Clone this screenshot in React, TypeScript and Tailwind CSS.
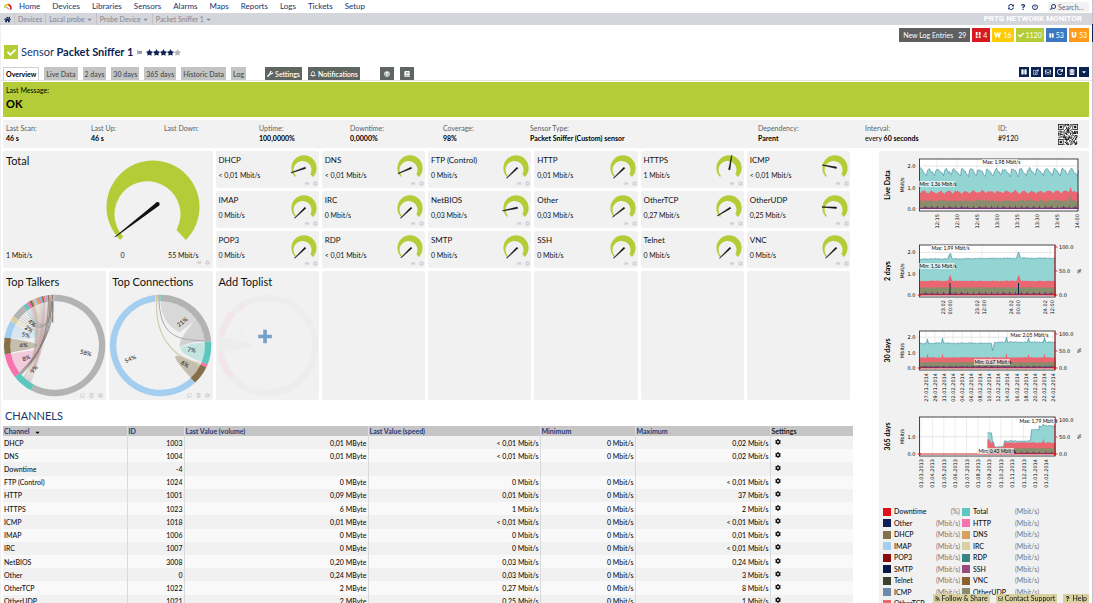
import React from "react";
import {
  FaRegBell, FaCaretDown, FaCheck, FaCog, FaFlag, FaHome, FaPause, FaPowerOff,
  FaQuestion, FaRegClone, FaRegEnvelope, FaRss, FaSearch, FaStar, FaSyncAlt, FaThumbtack,
  FaTrashAlt, FaWrench, FaRegEdit, FaRedo, FaGlobe, FaBook,
} from "react-icons/fa";

const noise = (i: number, seed = 1) => {
  const v = Math.sin(i * 12.9898 + seed * 78.233) * 43758.5453;
  return v - Math.floor(v);
};

/* ---------- top bars ---------- */

const NAV = ["Home", "Devices", "Libraries", "Sensors", "Alarms", "Maps", "Reports", "Logs", "Tickets", "Setup"];

function TopNav() {
  return (
    <header className="flex h-[13px] items-center bg-white pl-1 pr-[3px] text-[8px] leading-[13px] text-[#17346b]">
      <svg viewBox="0 0 16 14" className="h-2 w-2" aria-hidden="true">
        <path d="M1 9A7 7 0 0 1 5 3" fill="none" stroke="#b4cc38" strokeWidth="3" />
        <path d="M4 3.4A7 7 0 0 1 10 2.5" fill="none" stroke="#ffb400" strokeWidth="3" />
        <path d="M9 2.3A7 7 0 0 1 13 12" fill="none" stroke="#d71920" strokeWidth="3.4" />
        <path d="M5 7l5 5" stroke="#444" strokeWidth="1.6" />
      </svg>
      <nav className="ml-[7px] flex gap-3">
        {NAV.map((n) => (
          <a key={n} href="#">{n}</a>
        ))}
      </nav>
      <div className="ml-auto flex items-center gap-[6px] text-[7px]">
        <button aria-label="Refresh"><FaSyncAlt size={6} /></button>
        <button aria-label="Help"><FaQuestion size={6} /></button>
        <button aria-label="Log out"><FaPowerOff size={6} /></button>
        <label className="ml-1 flex h-[10px] items-center gap-[2px] bg-[#f2f2f2] pl-[2px]">
          <FaSearch size={6} className="-scale-x-100" />
          <input aria-label="Search" placeholder="Search..." className="w-[31px] bg-transparent leading-[10px] outline-none placeholder:text-[#6a6a72]" />
        </label>
      </div>
    </header>
  );
}

const CRUMBS = [
  { t: "Devices", menu: false },
  { t: "Local probe", menu: true },
  { t: "Probe Device", menu: true },
  { t: "Packet Sniffer 1", menu: true },
];

function Crumbs() {
  return (
    <div className="flex h-3 items-center bg-[#d5d5dc] text-[7px] leading-3 text-[#85858d]">
      <a href="#" aria-label="Home" className="flex w-[14px] justify-center text-[#0b2353]"><FaHome size={7} /></a>
      {CRUMBS.map((c) => (
        <a key={c.t} href="#" className="flex items-center gap-px border-l border-[#c2c2c9] px-[3px]">
          {c.t}
          {c.menu && <FaCaretDown size={7} />}
        </a>
      ))}
      <strong className="ml-auto pr-[10px] font-['Roboto',sans-serif] text-[8px] font-bold text-white">PRTG NETWORK MONITOR</strong>
    </div>
  );
}

const BangIcon = () => (
  <svg viewBox="0 0 8 8" className="h-[6px] w-[6px]" fill="currentColor" aria-hidden="true">
    <path d="M1 0h2.4v4.6H1zM5 0h2.4v4.6H5zM1 5.8h2.4V8H1zM5 5.8h2.4V8H5z" />
  </svg>
);
const UIcon = () => (
  <svg viewBox="0 0 8 8" className="h-[6px] w-[6px]" fill="none" stroke="currentColor" strokeWidth="2.2" aria-hidden="true">
    <path d="M2 0v4.5a2 2 0 0 0 4 0V0" />
  </svg>
);
const WIcon = () => (
  <svg viewBox="0 0 10 8" className="h-[6px] w-[7px]" fill="none" stroke="currentColor" strokeWidth="2" aria-hidden="true">
    <path d="M1 0l1.8 6.5L5 1l2.2 5.5L9 0" />
  </svg>
);

function StatusRow() {
  return (
    <div className="flex justify-end gap-[2px] pr-[3px] pt-[3px] text-[7px] leading-[14px] text-white">
      <a href="#" className="flex h-[14px] items-center gap-[5px] bg-[#5f5f5f] px-1"><span>New Log Entries</span><span>29</span></a>
      <a href="#" className="flex h-[14px] items-center gap-[2px] bg-[#d71920] px-[3px]"><BangIcon />4</a>
      <a href="#" className="flex h-[14px] items-center gap-[2px] bg-[#ffcb05] px-[2px]"><WIcon />16</a>
      <a href="#" className="flex h-[14px] items-center gap-[2px] bg-[#b4cc38] px-[2px]"><FaCheck size={6} />1120</a>
      <a href="#" className="flex h-[14px] items-center gap-[2px] bg-[#3c78bf] px-[3px]"><FaPause size={5} />53</a>
      <a href="#" className="flex h-[14px] items-center gap-[2px] bg-[#ff9a1c] px-[2px]"><UIcon />53</a>
    </div>
  );
}

function Title() {
  return (
    <div className="flex h-[20px] items-center pl-[3px] text-[11px] leading-[14px] text-[#17346b]">
      <span className="mr-[3px] flex h-[14px] w-[14px] items-center justify-center bg-[#b4cc38] text-white"><FaCheck size={9} /></span>
      <h1 className="font-normal">Sensor <b className="font-bold text-[#0b2353]">Packet Sniffer 1</b></h1>
      <FaFlag size={5} className="mx-1 text-[#9a9aa2]" />
      <span className="flex text-[#0b2353]" role="img" aria-label="4 of 5 stars">
        {[0, 1, 2, 3, 4].map((i) => (
          <FaStar key={i} size={7} className={i === 4 ? "text-[#b4b4ba]" : ""} />
        ))}
      </span>
    </div>
  );
}

const TABS = ["Live Data", "2 days", "30 days", "365 days", "Historic Data", "Log"];
const TOOLS = [
  { n: "Pause", I: FaPause }, { n: "Edit", I: FaRegEdit }, { n: "Mail", I: FaRegEnvelope },
  { n: "Scan now", I: FaRedo }, { n: "Delete", I: FaTrashAlt }, { n: "More", I: FaCaretDown },
];

function Tabs() {
  return (
    <div className="flex h-[19px] items-end border-b border-[#e4e4e8] pl-[2px] pr-[3px] text-[7px] font-semibold leading-3">
      <div className="flex gap-[5px] text-[#50545c]">
        <button className="h-[13px] border border-b-0 border-[#d0d0d0] bg-white px-[2px] font-bold text-black">Overview</button>
        {TABS.map((t) => (
          <button key={t} className="h-[13px] bg-[#c2c5c3] px-[2px]">{t}</button>
        ))}
      </div>
      <div className="ml-[19px] flex gap-[6px] text-white">
        <button className="flex h-[13px] items-center gap-[2px] bg-[#5f6661] px-[2px]"><FaWrench size={6} />Settings</button>
        <button className="flex h-[13px] items-center gap-[2px] bg-[#5f6661] px-[2px]"><FaRegBell size={6} />Notifications</button>
        <button aria-label="Map" className="ml-[14px] flex h-[13px] w-[14px] items-center justify-center bg-[#5f6661]"><FaGlobe size={6} /></button>
        <button aria-label="Book" className="flex h-[13px] w-[14px] items-center justify-center bg-[#5f6661]"><FaBook size={6} /></button>
      </div>
      <div className="mb-[3px] ml-auto flex gap-[2px] text-white">
        {TOOLS.map(({ n, I }) => (
          <button key={n} aria-label={n} className="flex h-[10px] w-[10px] items-center justify-center bg-[#0b2353]"><I size={6} /></button>
        ))}
      </div>
    </div>
  );
}

/* ---------- info strip ---------- */

const INFO: [string, React.ReactNode][] = [
  ["Last Scan:", <b>46 s</b>],
  ["Last Up:", <b>46 s</b>],
  ["Last Down:", ""],
  ["Uptime:", <b>100,0000%</b>],
  ["Downtime:", <b>0,0000%</b>],
  ["Coverage:", <b>98%</b>],
  ["Sensor Type:", <b>Packet Sniffer (Custom) sensor</b>],
  ["Dependency:", <b>Parent</b>],
  ["Interval:", <>every <b>60 seconds</b></>],
  ["ID:", "#9120"],
];

function QrCode() {
  const n = 25;
  const finder = (x: number, y: number) => (x < 8 && y < 8) || (x >= n - 8 && y < 8) || (x < 8 && y >= n - 8);
  const cells: string[] = [];
  for (let y = 0; y < n; y++) for (let x = 0; x < n; x++) if (!finder(x, y) && noise(y * n + x, 5) > 0.5) cells.push(`M${x} ${y}h1v1h-1z`);
  return (
    <svg viewBox="0 0 25 25" className="h-[21px] w-[20px]" preserveAspectRatio="none" role="img" aria-label="QR code">
      <rect width="25" height="25" fill="#fff" />
      <path d={cells.join("")} fill="#222" />
      {[[0, 0], [18, 0], [0, 18]].map(([x, y]) => (
        <g key={`${x}-${y}`} fill="#222">
          <rect x={x + 0.5} y={y + 0.5} width="6" height="6" fill="none" stroke="#222" />
          <rect x={x + 2} y={y + 2} width="3" height="3" />
        </g>
      ))}
    </svg>
  );
}

function InfoStrip() {
  return (
    <dl className="mt-[3px] grid h-[28px] grid-cols-[85fr_73fr_95fr_91fr_93fr_87fr_228fr_107fr_133fr_60fr_31fr] items-center bg-[#f2f2f2] pl-[3px] text-[7px] leading-[10px]">
      {INFO.map(([k, v]) => (
        <div key={k} className="h-[22px] whitespace-nowrap">
          <dt className="text-[#5f5f5f]">{k}</dt>
          <dd className="text-black">{v}</dd>
        </div>
      ))}
      <div><QrCode /></div>
    </dl>
  );
}

/* ---------- gauges ---------- */

const GAUGE = "M-32.9 32.9A46.5 46.5 0 1 1 32.9 32.9L23.5 23A33 33 0 1 0 -29.8 29.6Z";

function TileActions({ toplist = false }: { toplist?: boolean }) {
  return (
    <span className="flex gap-1 text-[#d0d0d2]">
      {toplist ? (
        <>
          <button aria-label="Copy"><FaRegClone size={5} /></button>
          <button aria-label="Delete"><FaTrashAlt size={5} /></button>
        </>
      ) : (
        <button aria-label="Pin"><FaThumbtack size={5} className="rotate-90" /></button>
      )}
      <button aria-label="Settings"><FaCog size={5} /></button>
    </span>
  );
}

const ZERO = [-9.4, 10.2];
const CHANNEL_TILES: { n: string; v: string; tip: number[]; piv?: number[] }[] = [
  { n: "DHCP", v: "< 0,01 Mbit/s", tip: [-13, 4.8] },
  { n: "DNS", v: "< 0,01 Mbit/s", tip: [-12, 5.6] },
  { n: "FTP (Control)", v: "0 Mbit/s", tip: ZERO },
  { n: "HTTP", v: "0,01 Mbit/s", tip: ZERO },
  { n: "HTTPS", v: "1 Mbit/s", tip: [2.7, -12.6], piv: [0.3, 1.7] },
  { n: "ICMP", v: "< 0,01 Mbit/s", tip: [-12.6, -3] },
  { n: "IMAP", v: "0 Mbit/s", tip: ZERO },
  { n: "IRC", v: "0 Mbit/s", tip: ZERO },
  { n: "NetBIOS", v: "0,03 Mbit/s", tip: [-13.4, 2.8] },
  { n: "Other", v: "0,03 Mbit/s", tip: [-10.4, 9] },
  { n: "OtherTCP", v: "0,27 Mbit/s", tip: [-11.6, 7.8] },
  { n: "OtherUDP", v: "0,25 Mbit/s", tip: [-13, -1] },
  { n: "POP3", v: "0 Mbit/s", tip: ZERO },
  { n: "RDP", v: "< 0,01 Mbit/s", tip: [-9, 9.8] },
  { n: "SMTP", v: "0 Mbit/s", tip: ZERO },
  { n: "SSH", v: "0 Mbit/s", tip: ZERO },
  { n: "Telnet", v: "0 Mbit/s", tip: ZERO },
  { n: "VNC", v: "0 Mbit/s", tip: ZERO },
];

function needle(px: number, py: number, tx: number, ty: number, w: number) {
  const l = Math.hypot(tx - px, ty - py);
  const nx = (-(ty - py) / l) * w;
  const ny = ((tx - px) / l) * w;
  return `M${px + nx} ${py + ny}L${tx + nx / 5} ${ty + ny / 5}L${tx - nx / 5} ${ty - ny / 5}L${px - nx} ${py - ny}Z`;
}

function ChannelTile({ n, v, tip, piv = [1.4, -0.2] }: (typeof CHANNEL_TILES)[number]) {
  return (
    <section className="flex justify-between rounded-[2px] bg-[#f1f1f1] pl-[3px] text-[#111]">
      <div className="flex flex-col gap-1 whitespace-nowrap pt-[3px]">
        <h3 className="text-[8px] leading-3">{n}</h3>
        <p className="text-[7px] leading-[10px]">{v}</p>
      </div>
      <div className="flex flex-col items-end pr-px pt-[3px]">
        <svg viewBox="-14 -14 28 27" className="h-[27px] w-[28px]" role="img" aria-label={`${n} gauge`}>
          <path d={GAUGE} transform="scale(.272)" fill="#b4cc38" />
          <path d={needle(piv[0], piv[1], tip[0], tip[1], 0.7)} fill="#111" stroke="#111" strokeWidth=".5" />
        </svg>
        <TileActions />
      </div>
    </section>
  );
}

function TotalTile() {
  return (
    <section className="col-span-2 row-span-3 flex justify-between rounded-[2px] bg-[#f1f1f1] pl-[3px] text-[7px] leading-[10px] text-[#111]">
      <div className="flex flex-col justify-between pb-2 pt-[3px]">
        <h3 className="text-[11px] leading-[14px]">Total</h3>
        <p>1 Mbit/s</p>
      </div>
      <div className="flex flex-col pt-2">
        <svg viewBox="-48 -48 96 88" className="mr-3 h-[88px] w-[96px]" role="img" aria-label="Total gauge">
          <path d={GAUGE} fill="#b4cc38" />
          <path d={needle(5, -3.2, -38, 30, 2.1)} fill="#111" />
          <circle cx="4.6" cy="-3" r="2.1" fill="#111" />
        </svg>
        <div className="flex justify-between pl-4 pr-[14px] pt-[3px]"><span>0</span><span>55 Mbit/s</span></div>
        <div className="self-end pr-[3px]"><TileActions /></div>
      </div>
    </section>
  );
}

/* ---------- toplists ---------- */

const pt = (deg: number, r: number) => {
  const a = ((deg - 90) * Math.PI) / 180;
  return `${(Math.cos(a) * r).toFixed(2)} ${(Math.sin(a) * r).toFixed(2)}`;
};
const ring = (a: number, b: number, ro = 50.7, ri = 44.3) => {
  const big = b - a > 180 ? 1 : 0;
  return `M${pt(a, ro)}A${ro} ${ro} 0 ${big} 1 ${pt(b, ro)}L${pt(b, ri)}A${ri} ${ri} 0 ${big} 0 ${pt(a, ri)}Z`;
};
const ribbon = (a: number, b: number, c: number, d: number, r = 44.3) =>
  `M${pt(a, r)}A${r} ${r} 0 0 1 ${pt(b, r)}Q0 0 ${pt(c, r)}A${r} ${r} 0 0 1 ${pt(d, r)}Q0 0 ${pt(a, r)}Z`;
const lobe = (a: number, b: number, depth: number) =>
  `M${pt(a, 44.3)}A44.3 44.3 0 0 1 ${pt(b, 44.3)}C${pt(b - 2, depth)} ${pt(a + 2, depth)} ${pt(a, 44.3)}Z`;

const G = "#b3b3b3", T = "#5cc7be", P = "#f673ae", B = "#857049", L = "#a3cef0", Y = "#dccf9f", O = "#d6a05e";

const TALKERS: [number, number, string][] = [
  [0, 208, G], [208, 232, T], [232, 260, P], [260, 279.4, B], [279.4, 299, L], [299, 305.5, Y], [305.5, 322, G],
  [322, 326.5, T], [326.5, 330, P], [330, 333, B], [333, 335, O], [335, 338, L], [338, 341, O], [341, 343, P],
  [343, 345, T], [345, 347, B], [347, 349, P], [349, 352, G], [352, 354, "#a06c62"], [354, 357, G], [357, 358.5, "#8c7462"], [358.5, 360, G],
];
const CONNECTIONS: [number, number, string][] = [
  [0, 85.4, G], [85.4, 112, T], [112, 115.5, P], [115.5, 137.4, B], [137.4, 353.6, L], [353.6, 357, Y], [357, 359, G], [359, 360, T],
];

const Pct = ({ x, y, r, children }: { x: number; y: number; r: number; children: string }) => (
  <text transform={`translate(${x} ${y}) rotate(${r})`} textAnchor="middle" dominantBaseline="middle" fontSize="6" fill="#111">{children}</text>
);

function TalkersChart() {
  return (
    <>
      {TALKERS.map(([a, b, c]) => <path key={a} d={ring(a, b)} fill={c} />)}
      <path d={lobe(261, 279, 8)} fill={B} opacity=".4" />
      <path d={lobe(233, 259, 6)} fill={P} opacity=".3" />
      <path d={ribbon(280, 298, 326, 330)} fill={L} opacity=".3" />
      <path d={ribbon(299, 305, 330, 333)} fill={Y} opacity=".35" />
      {TALKERS.slice(7, 20).map(([a, b, c], i) => (
        <path key={a} d={`M${pt(a, 44.3)}L${pt(b, 44.3)}Q-8 -2 ${pt(225 - i, 44.3)}L${pt(224 - i, 44.3)}Q-12 -2 ${pt(a, 44.3)}Z`} fill={c} stroke={c} strokeWidth=".4" opacity=".22" />
      ))}
      {[306, 309, 312, 315, 318, 321].map((a, i) => (
        <path key={a} d={`M${pt(a, 44.3)}C${pt(a + 4, 22)} ${pt(340, 12)} ${pt(354 + i / 2, 44.3)}`} fill="none" stroke="#999" strokeWidth=".6" opacity=".7" />
      ))}
      {[0, 1, 2, 3].map((i) => (
        <path key={i} d={`M${pt(229 + i, 44.3)}Q${-6 + i * 2} ${2 - i * 3} ${pt(352 + i * 2, 44.3)}`} fill="none" stroke={i % 2 ? "#777" : "#86705f"} strokeWidth=".9" opacity=".8" />
      ))}
      <path d="M-2-44V-23" stroke="#888" strokeWidth="1.4" />
      <Pct x={31} y={8} r={14}>58%</Pct>
      <Pct x={-31} y={0} r={0}>6%</Pct>
      <Pct x={-28} y={13} r={-22}>8%</Pct>
      <Pct x={-20} y={24} r={-50}>9%</Pct>
      <Pct x={-29} y={-10} r={10}>5%</Pct>
      <Pct x={-26} y={-16} r={30}>2%</Pct>
      <Pct x={-23} y={-22} r={40}>4%</Pct>
    </>
  );
}

function ConnectionsChart() {
  return (
    <>
      <path d={`M${pt(0, 44.3)}A44.3 44.3 0 0 1 ${pt(53, 44.3)}C30-20 22-16 19-13C8-18 0-30 ${pt(0, 44.3)}Z`} fill={G} opacity=".4" />
      <path d={`M${pt(53, 44.3)}A44.3 44.3 0 0 1 ${pt(85, 44.3)}C34-4 24-2 19 2C18-6 26-14 ${pt(53, 44.3)}Z`} fill={G} opacity=".5" />
      <path d={lobe(86, 112, 13)} fill={T} opacity=".3" />
      <path d={lobe(116, 137, 10)} fill={B} opacity=".4" />
      <path d={`M${pt(358, 44.3)}C0-4 24-6 ${pt(84, 44.3)}`} fill="none" stroke="#aaa" />
      <path d={`M${pt(355, 44.3)}C-6-8 14 14 ${pt(114, 44.3)}`} fill="none" stroke="#d3cbae" strokeWidth="1.2" />
      {CONNECTIONS.map(([a, b, c]) => <path key={a} d={ring(a, b)} fill={c} />)}
      <Pct x={22} y={-23} r={-38}>21%</Pct>
      <Pct x={31} y={5} r={8}>7%</Pct>
      <Pct x={24} y={19} r={30}>6%</Pct>
      <Pct x={-30} y={14} r={-24}>54%</Pct>
    </>
  );
}

function AddChart() {
  return (
    <>
      <circle r="47.5" fill="none" stroke="#ededed" strokeWidth="6.4" />
      <path d={ring(228, 262)} fill="#f2e6ec" />
      <path d={ring(280, 314)} fill="#f2e6ec" />
      <path d={ring(324, 330)} fill="#f2e6ec" />
      <path d={lobe(262, 280, 6)} fill="#eeedec" />
      {[318, 326, 334, 342, 350].map((a) => (
        <path key={a} d={`M${pt(a, 44.3)}Q-18-14 ${pt(a - 70, 44)}`} fill="none" stroke="#eeeef0" strokeWidth=".6" />
      ))}
      <path d="M-4.4-15.8h3.6v5h5v3.6h-5v5h-3.6v-5h-5v-3.6h5z" fill="#74a0cc" />
    </>
  );
}

function Toplist({ title, actions = true, children }: { title: string; actions?: boolean; children: React.ReactNode }) {
  return (
    <section className="relative rounded-[2px] bg-[#f1f1f1] pt-[3px] text-[#111]">
      <h3 className="whitespace-nowrap pl-[3px] text-[11px] leading-4">{title}</h3>
      <svg viewBox="-51.5 -55.5 103 110" className="h-[110px] w-full" role="img" aria-label={title}>{children}</svg>
      {actions && <div className="absolute bottom-[2px] right-[3px]"><TileActions toplist /></div>}
    </section>
  );
}

/* ---------- channel table ---------- */

const ROWS = [
  ["DHCP", "1003", "0,01 MByte", "< 0,01 Mbit/s", "0 Mbit/s", "0,02 Mbit/s"],
  ["DNS", "1004", "0,01 MByte", "< 0,01 Mbit/s", "0 Mbit/s", "0,02 Mbit/s"],
  ["Downtime", "-4", "", "", "", ""],
  ["FTP (Control)", "1024", "0 MByte", "0 Mbit/s", "0 Mbit/s", "< 0,01 Mbit/s"],
  ["HTTP", "1001", "0,09 MByte", "0,01 Mbit/s", "0 Mbit/s", "37 Mbit/s"],
  ["HTTPS", "1023", "6 MByte", "1 Mbit/s", "0 Mbit/s", "2 Mbit/s"],
  ["ICMP", "1018", "0,01 MByte", "< 0,01 Mbit/s", "0 Mbit/s", "< 0,01 Mbit/s"],
  ["IMAP", "1006", "0 MByte", "0 Mbit/s", "0 Mbit/s", "0,01 Mbit/s"],
  ["IRC", "1007", "0 MByte", "0 Mbit/s", "0 Mbit/s", "< 0,01 Mbit/s"],
  ["NetBIOS", "3008", "0,20 MByte", "0,03 Mbit/s", "0 Mbit/s", "0,24 Mbit/s"],
  ["Other", "0", "0,24 MByte", "0,03 Mbit/s", "0 Mbit/s", "3 Mbit/s"],
  ["OtherTCP", "1022", "2 MByte", "0,27 Mbit/s", "0 Mbit/s", "8 Mbit/s"],
  ["OtherUDP", "1021", "2 MByte", "0,25 Mbit/s", "0 Mbit/s", "1 Mbit/s"],
];

function Channels() {
  return (
    <section>
      <h2 className="pl-[2px] pt-[9px] text-[11px] leading-[14px] text-[#17346b]">CHANNELS</h2>
      <table className="mt-[3px] h-[182px] w-full table-fixed border-collapse text-[7px] font-medium leading-[10px] text-[#111]">
        <colgroup>
          <col className="w-[124px]" /><col className="w-[57px]" /><col className="w-[184px]" /><col className="w-[172px]" />
          <col className="w-[95px]" /><col className="w-[135px]" /><col />
        </colgroup>
        <thead>
          <tr className="h-[10px] bg-[#c5c5c5] text-left text-[#1d3c7a]">
            {["Channel", "ID", "Last Value (volume)", "Last Value (speed)", "Minimum", "Maximum"].map((h, i) => (
              <th key={h} className="border-r border-[#dadada] p-0 pl-px font-bold">
                {h}
                {i === 0 && <FaCaretDown size={7} className="ml-1 inline text-black" />}
              </th>
            ))}
            <th className="p-0 pl-px font-bold text-[#222]">Settings</th>
          </tr>
        </thead>
        <tbody>
          {ROWS.map((r) => (
            <tr key={r[0]} className="odd:bg-[#f1f1f1] even:bg-[#f9f9f9]">
              <td className="border-r border-[#dadada] p-0 pl-px">{r[0]}</td>
              {r.slice(1).map((c, i) => (
                <td key={i} className="border-r border-[#dadada] p-0 pr-px text-right">{c}</td>
              ))}
              <td className="p-0 pl-1"><button aria-label={`${r[0]} settings`} className="block pb-[2px]"><FaCog size={6} /></button></td>
            </tr>
          ))}
        </tbody>
      </table>
    </section>
  );
}

/* ---------- graphs ---------- */

type Graph = {
  name: string;
  h: number;
  top: number;
  zero: number;
  unit: number;
  right: number;
  yTicks: number[];
  pctTop?: number;
  labels: { x: number; lines: string[] }[];
  max: { x: number; y: number; t: string };
  min: { x: number; y: number; t: string };
  total: (f: number, i: number) => number;
  red: (f: number, i: number) => number;
  olive: (f: number, i: number) => number;
  from?: number;
};

const near = (f: number, c: number, w = 0.006) => Math.max(0, 1 - Math.abs(f - c) / w);
const spikes = [0.06, 0.17, 0.64, 0.8, 0.92];
const year = (f: number) => (f < 0.53 ? 1.2 : f < 0.55 ? 0.7 : f < 0.62 ? 0.4 : f < 0.82 ? 0.72 : f < 0.88 ? 1.38 : 1.6);

const GRAPHS: Graph[] = [
  {
    name: "Live Data", h: 86, top: 8, zero: 58, unit: 21.5, right: 199, yTicks: [0, 1, 2],
    labels: ["12:15", "12:30", "12:45", "13:00", "13:15", "13:30", "13:45", "14:00"].map((t, i) => ({ x: 58 + i * 20, lines: [t] })),
    max: { x: 103, y: 11, t: "Max: 1,98 Mbit/s" }, min: { x: 40, y: 33, t: "Min: 1,36 Mbit/s" },
    total: (f, i) => 1.94 - 0.5 * Math.pow(Math.abs(((f * 19 + 0.1) % 1) - 0.25), 1.1) - noise(i, 2) * 0.12,
    red: (f, i) => 0.68 + 0.12 * Math.abs(Math.sin(f * 60)) + noise(i, 3) * 0.08 + near(f, 0.95, 0.01) * 0.25,
    olive: (f, i) => 0.32 + 0.14 * noise(i, 4) + near(f, 0.95, 0.01) * 0.2,
  },
  {
    name: "2 days", h: 86, top: 8, zero: 58, unit: 21.3, right: 176, yTicks: [0, 1, 2], pctTop: 10,
    labels: [["23.02", "00:00"], ["23.02", "12:00"], ["24.02", "00:00"], ["24.02", "12:00"]].map((l, i) => ({ x: 69 + i * 34, lines: l })),
    max: { x: 52, y: 11, t: "Max: 1,99 Mbit/s" }, min: { x: 40, y: 29, t: "Min: 1,56 Mbit/s" },
    total: (f, i) => 1.66 + noise(i, 2) * 0.05 + f * 0.05 + 0.32 * (near(f, 0.225, 0.015) + near(f, 0.73, 0.015)),
    red: (f, i) => 0.64 + noise(i, 6) * 0.04 + 0.33 * (near(f, 0.225, 0.015) + near(f, 0.73, 0.015)),
    olive: (f, i) => 0.34 + 0.03 * noise(i, 4),
  },
  {
    name: "30 days", h: 86, top: 8, zero: 45, unit: 15.4, right: 176, yTicks: [0, 1, 2], pctTop: 11,
    labels: ["27.01.2014", "29.01.2014", "31.01.2014", "02.02.2014", "04.02.2014", "06.02.2014", "08.02.2014", "10.02.2014", "12.02.2014", "14.02.2014", "16.02.2014", "18.02.2014", "20.02.2014", "22.02.2014", "24.02.2014"].map((t, i) => ({ x: 47 + i * 9.05, lines: [t] })),
    max: { x: 131, y: 12, t: "Max: 2,05 Mbit/s" }, min: { x: 95, y: 39, t: "Min: 0,67 Mbit/s" },
    total: (f, i) => 1.57 + noise(i, 8) * 0.07 + (f > 0.54 ? 0.07 : 0) - near(f, 0.54) * 0.95 + spikes.reduce((s, c) => s + near(f, c) * 0.35, 0),
    red: (f, i) => 0.66 + noise(i, 9) * 0.05 + spikes.reduce((s, c) => s + near(f, c) * 0.3, 0),
    olive: (f, i) => 0.36 + noise(i, 4) * 0.03,
  },
  {
    name: "365 days", h: 86, top: 8, zero: 45, unit: 17.2, right: 176, yTicks: [0, 1], pctTop: 11,
    labels: ["01.03.2013", "01.04.2013", "01.05.2013", "01.06.2013", "01.07.2013", "01.08.2013", "01.09.2013", "01.10.2013", "01.11.2013", "01.12.2013", "01.01.2014", "01.02.2014"].map((t, i) => ({ x: 42 + i * 11.4, lines: [t] })),
    max: { x: 140, y: 12, t: "Max: 1,79 Mbit/s" }, min: { x: 99, y: 42, t: "Min: 0,43 Mbit/s" },
    from: 0.5,
    total: (f, i) => year(f) + noise(i, 8) * 0.06 + near(f, 0.91) * 0.2,
    red: (f, i) => Math.min(year(f) - 0.03, 0.64) + noise(i, 9) * 0.05 + near(f, 0.51, 0.015) * 0.25 + near(f, 0.91) * 0.3,
    olive: (f, i) => 0.32 + noise(i, 4) * 0.03,
  },
];

function GraphView({ g }: { g: Graph }) {
  const x0 = 40.5;
  const w = g.right - x0;
  const bottom = g.zero + 2;
  const n = Math.round(w);
  const start = Math.round((g.from ?? 0) * n);
  const series = (fn: (f: number, i: number) => number) => {
    const p: string[] = [];
    for (let i = start; i <= n; i++) p.push(`${(x0 + i).toFixed(1)} ${(g.zero - fn(i / n, i) * g.unit).toFixed(1)}`);
    return p.join("L");
  };
  const area = (fn: (f: number, i: number) => number) => `M${x0 + start} ${g.zero}L${series(fn)}V${g.zero}Z`;
  const mid = (g.top + bottom) / 2;
  return (
    <svg viewBox={`0 0 210 ${g.h}`} className="block w-full font-['DejaVu_Sans',sans-serif]" fontSize="5" fill="#000" role="img" aria-label={`${g.name} graph`}>
      <rect x={x0} y={g.top} width={w} height={bottom - g.top} fill="#fff" />
      {g.labels.map((l) => <path key={l.lines.join()} d={`M${l.x} ${g.top}V${bottom + 2}`} stroke="#dcdcdc" strokeWidth=".5" />)}
      {g.yTicks.map((t) => <path key={t} d={`M${x0 - 2} ${g.zero - t * g.unit}H${g.right}`} stroke="#ccc" strokeWidth=".5" />)}
      <path d={area(g.total)} fill="#93d5d3" />
      <path d={`M${series(g.total)}`} fill="none" stroke="#4c8fa3" strokeWidth=".7" />
      <path d={area(g.red)} fill="#ea6671" />
      <path d={area(g.olive)} fill="#8a8d6c" />
      <path d={area((_, i) => 0.04 + (i % 6 === 0 ? 0.12 : noise(i, 11) * 0.04))} fill="#7b3278" />
      {g.name === "2 days" && <path d="M71 58V46M139.5 58V46" stroke="#0b2353" />}
      {g.name === "30 days" && <path d={`M40.5 44H176`} stroke="#1f3c8c" strokeWidth=".8" strokeDasharray="6 1" />}
      <rect x={x0} y={g.top} width={w} height={bottom - g.top} fill="none" stroke="#333" strokeWidth=".9" />
      {g.yTicks.map((t) => <text key={t} x={x0 - 4} y={g.zero - t * g.unit + 2} textAnchor="end">{t}.0</text>)}
      {g.pctTop !== undefined && (
        <>
          <path d={`M${g.right} ${g.top}V${bottom}M${x0} ${g.zero}H${g.right}`} stroke="#d9202b" strokeWidth=".9" />
          <circle cx={g.right} cy={g.zero} r="1.2" fill="#e0101b" />
          <circle cx={x0} cy={g.zero} r="1.2" fill="#e0101b" />
          {[100, 50, 0].map((p) => {
            const y = g.zero - (p / 100) * (g.zero - g.pctTop!);
            return (
              <g key={p}>
                <path d={`M${g.right} ${y}h2.4`} stroke="#d9202b" strokeWidth=".9" />
                <text x={g.right + 4} y={y + 2}>{p.toFixed(1)}</text>
              </g>
            );
          })}
          <text transform={`translate(202 ${mid}) rotate(-90)`} textAnchor="middle">%</text>
        </>
      )}
      {g.labels.map((l) =>
        l.lines.map((t, k) => (
          <text key={t + k} transform={`translate(${l.x + 2 + (l.lines.length > 1 ? k * 7 - 5 : 0)} ${bottom + 3}) rotate(-90)`} textAnchor="end">{t}</text>
        ))
      )}
      {[g.max, g.min].map((m) => (
        <g key={m.t}>
          <rect x={m.x} y={m.y - 3} width="36" height="6" fill="#fff" opacity=".65" />
          <text x={m.x + 0.5} y={m.y + 2} className="font-['Lato',sans-serif]">{m.t}</text>
        </g>
      ))}
      <text transform={`translate(25 ${mid}) rotate(-90)`} textAnchor="middle">Mbit/s</text>
      <text transform={`translate(11 ${mid}) rotate(-90)`} textAnchor="middle" className="font-['Lato',sans-serif] font-bold" fontSize="7" fill="#000">{g.name}</text>
    </svg>
  );
}

const LEGEND: [string, string, string][] = [
  ["Downtime", "(%)", "bg-[#e0101b]"], ["Total", "(Mbit/s)", "bg-[#5cc7be]"],
  ["Other", "(Mbit/s)", "bg-[#0b1f56]"], ["HTTP", "(Mbit/s)", "bg-[#f673ae]"],
  ["DHCP", "(Mbit/s)", "bg-[#857049]"], ["DNS", "(Mbit/s)", "bg-[#d6a05e]"],
  ["IMAP", "(Mbit/s)", "bg-[#a3cef0]"], ["IRC", "(Mbit/s)", "bg-[#dccfa4]"],
  ["POP3", "(Mbit/s)", "bg-[#8b0a0c]"], ["RDP", "(Mbit/s)", "bg-[#3a837f]"],
  ["SMTP", "(Mbit/s)", "bg-[#0a1848]"], ["SSH", "(Mbit/s)", "bg-[#9a4a7b]"],
  ["Telnet", "(Mbit/s)", "bg-[#3e412d]"], ["VNC", "(Mbit/s)", "bg-[#8a612f]"],
  ["ICMP", "(Mbit/s)", "bg-[#6f8aa8]"], ["OtherUDP", "(Mbit/s)", "bg-[#8a8d6c]"],
  ["OtherTCP", "(Mbit/s)", "bg-[#ea6671]"],
];

function Legend() {
  return (
    <ul className="ml-1 mt-3 grid h-[101px] grid-cols-[77px_77px] content-between gap-x-[2px] text-[7px] leading-[9px]">
      {LEGEND.map(([n, u, c]) => (
        <li key={n} className="flex h-[9px] items-center gap-[3px]">
          <span className={`h-2 w-2 shrink-0 ${c}`} />
          <span className="font-medium text-[#111]">{n}</span>
          <span className="ml-auto text-[#777]">{u}</span>
        </li>
      ))}
    </ul>
  );
}

function FooterButtons() {
  return (
    <div className="fixed bottom-0 right-1 flex gap-[6px] text-[7px] font-medium leading-[9px] text-[#222]">
      {[
        { t: "Follow & Share", I: FaRss }, { t: "Contact Support", I: FaRegEnvelope }, { t: "Help", I: FaQuestion },
      ].map(({ t, I }) => (
        <button key={t} className="flex h-[9px] items-center gap-[2px] bg-[#d9d09f] px-[2px]"><I size={5} />{t}</button>
      ))}
    </div>
  );
}

export default function App() {
  return (
    <div className="flex h-screen overflow-hidden bg-white font-['Lato','Noto_Sans',sans-serif]">
      <div className="min-w-0 flex-1">
        <TopNav />
        <Crumbs />
        <div className="border-l border-[#f0f0f2]">
          <StatusRow />
          <Title />
          <Tabs />
          <main className="pl-[2px] pr-[3px] pt-px">
            <section className="h-[35px] bg-[#b4cc38] px-[3px] text-black">
              <p className="pt-[3px] text-[7px] leading-[10px]">Last Message:</p>
              <p className="text-[11px] font-bold leading-[18px]">OK</p>
            </section>
            <InfoStrip />
            <div className="flex justify-between gap-[26px] pt-[3px]">
              <div className="min-w-0 flex-1">
                <div className="mr-[3px] grid grid-cols-8 grid-rows-[37px_37px_37px_129px] gap-[3px]">
                  <TotalTile />
                  {CHANNEL_TILES.map((t) => <ChannelTile key={t.n} {...t} />)}
                  <Toplist title="Top Talkers"><TalkersChart /></Toplist>
                  <Toplist title="Top Connections"><ConnectionsChart /></Toplist>
                  <Toplist title="Add Toplist" actions={false}><AddChart /></Toplist>
                  {[0, 1, 2, 3, 4].map((i) => <div key={i} className="rounded-[2px] bg-[#f1f1f1]" />)}
                </div>
                <Channels />
              </div>
              <aside className="w-[210px] shrink-0 bg-[#f1f1f1]">
                {GRAPHS.map((g) => <GraphView key={g.name} g={g} />)}
                <Legend />
              </aside>
            </div>
          </main>
        </div>
      </div>
      <div className="flex w-px flex-col bg-[#c4c4cc] pt-6"><span className="h-[18px] bg-[#0b2353]" /></div>
      <FooterButtons />
    </div>
  );
}
